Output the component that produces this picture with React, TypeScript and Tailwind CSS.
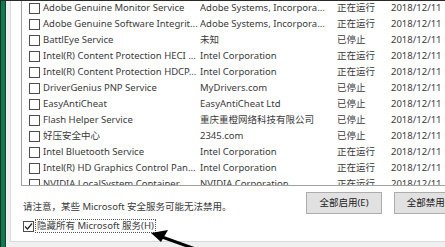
import React from 'react';

type Row = { name: string; maker: string; status: string; date: string };

const rows: Row[] = [
  { name: 'Adobe Genuine Monitor Service', maker: 'Adobe Systems, Incorpora...', status: '正在运行', date: '2018/12/11' },
  { name: 'Adobe Genuine Software Integrit...', maker: 'Adobe Systems, Incorpora...', status: '正在运行', date: '2018/12/11' },
  { name: 'BattlEye Service', maker: '未知', status: '已停止', date: '2018/12/11' },
  { name: 'Intel(R) Content Protection HECI ...', maker: 'Intel Corporation', status: '正在运行', date: '2018/12/11' },
  { name: 'Intel(R) Content Protection HDCP...', maker: 'Intel Corporation', status: '正在运行', date: '2018/12/11' },
  { name: 'DriverGenius PNP Service', maker: 'MyDrivers.com', status: '已停止', date: '2018/12/11' },
  { name: 'EasyAntiCheat', maker: 'EasyAntiCheat Ltd', status: '已停止', date: '2018/12/11' },
  { name: 'Flash Helper Service', maker: '重庆重橙网络科技有限公司', status: '已停止', date: '2018/12/11' },
  { name: '好压安全中心', maker: '2345.com', status: '已停止', date: '2018/12/11' },
  { name: 'Intel Bluetooth Service', maker: 'Intel Corporation', status: '正在运行', date: '2018/12/11' },
  { name: 'Intel(R) HD Graphics Control Pan...', maker: 'Intel Corporation', status: '正在运行', date: '2018/12/11' },
  { name: 'NVIDIA LocalSystem Container', maker: 'NVIDIA Corporation', status: '正在运行', date: '2018/12/11' },
];

const font = { fontFamily: '"Noto Sans", "Noto Sans CJK SC", sans-serif' };

const Box: React.FC<{ checked?: boolean }> = ({ checked }) => (
  <div className="w-[11px] h-[11px] border border-[#4d4d4d] bg-white shrink-0 flex items-center justify-center">
    {checked && (
      <svg width="9" height="9" viewBox="0 0 9 9">
        <path d="M1 4.5 L3.5 7 L8 1.5" fill="none" stroke="#222" strokeWidth="1.2" />
      </svg>
    )}
  </div>
);

export default function App() {
  return (
    <div
      className="relative w-[445px] h-[247px] overflow-hidden bg-[#f0f0f0] flex text-[#3a3a3a] text-[9.5px]"
      style={font}
    >
      {/* window frame edge */}
      <div className="w-[1px] shrink-0 bg-[#1d2b25]" />
      <div className="w-[4px] shrink-0 bg-[#0a7d4e]" />
      <div className="w-[1px] shrink-0 bg-[#1f3a33]" />

      <div className="flex-1 min-w-0 flex flex-col pl-[4px]">
        {/* tab page */}
        <div className="h-[242px] bg-white border-l border-b border-[#dadada] flex flex-col pl-[10px]">
          {/* service list */}
          <div className="h-[186px] border-l border-b border-[#a0a0a0] overflow-hidden flex flex-col">
            {rows.map((r) => (
              <div key={r.name} className="h-[16px] shrink-0 flex items-center whitespace-nowrap">
                <div className="w-[7px] shrink-0" />
                <Box />
                <div className="w-[160px] shrink-0 pl-[3px] overflow-hidden">{r.name}</div>
                <div className="w-[137px] shrink-0 overflow-hidden">{r.maker}</div>
                <div className="w-[54px] shrink-0">{r.status}</div>
                <div>{r.date} 1</div>
              </div>
            ))}
          </div>

          {/* bottom area */}
          <div className="flex items-start pt-[6px] whitespace-nowrap">
            <div className="w-[285px] shrink-0 pl-[2px] pt-[8px]">请注意，某些 Microsoft 安全服务可能无法禁用。</div>
            <div className="flex gap-[12px] shrink-0">
              <button className="w-[76px] h-[22px] bg-[#e1e1e1] border border-[#adadad] text-[#222]">全部启用(E)</button>
              <button className="w-[76px] h-[22px] bg-[#e1e1e1] border border-[#adadad] text-[#222]">全部禁用(D)</button>
            </div>
          </div>
          <div className="flex items-center pl-[2px] mt-[5px] gap-[1px]">
            <Box checked />
            <div className="border border-dotted border-[#555] px-[1px] leading-[12px] whitespace-nowrap">
              隐藏所有 Microsoft 服务(H)
            </div>
          </div>
        </div>
      </div>

      {/* top edge line */}
      <div className="absolute left-0 top-0 w-full h-[1px] bg-[#2a2a2a]" />

      {/* annotation arrow */}
      <svg className="absolute left-0 top-0" width="445" height="247" viewBox="0 0 445 247">
        <line x1="162" y1="237" x2="215" y2="256" stroke="#000" strokeWidth="3" />
        <polygon points="151,233 168,230 161,242" fill="#000" />
      </svg>
    </div>
  );
}
